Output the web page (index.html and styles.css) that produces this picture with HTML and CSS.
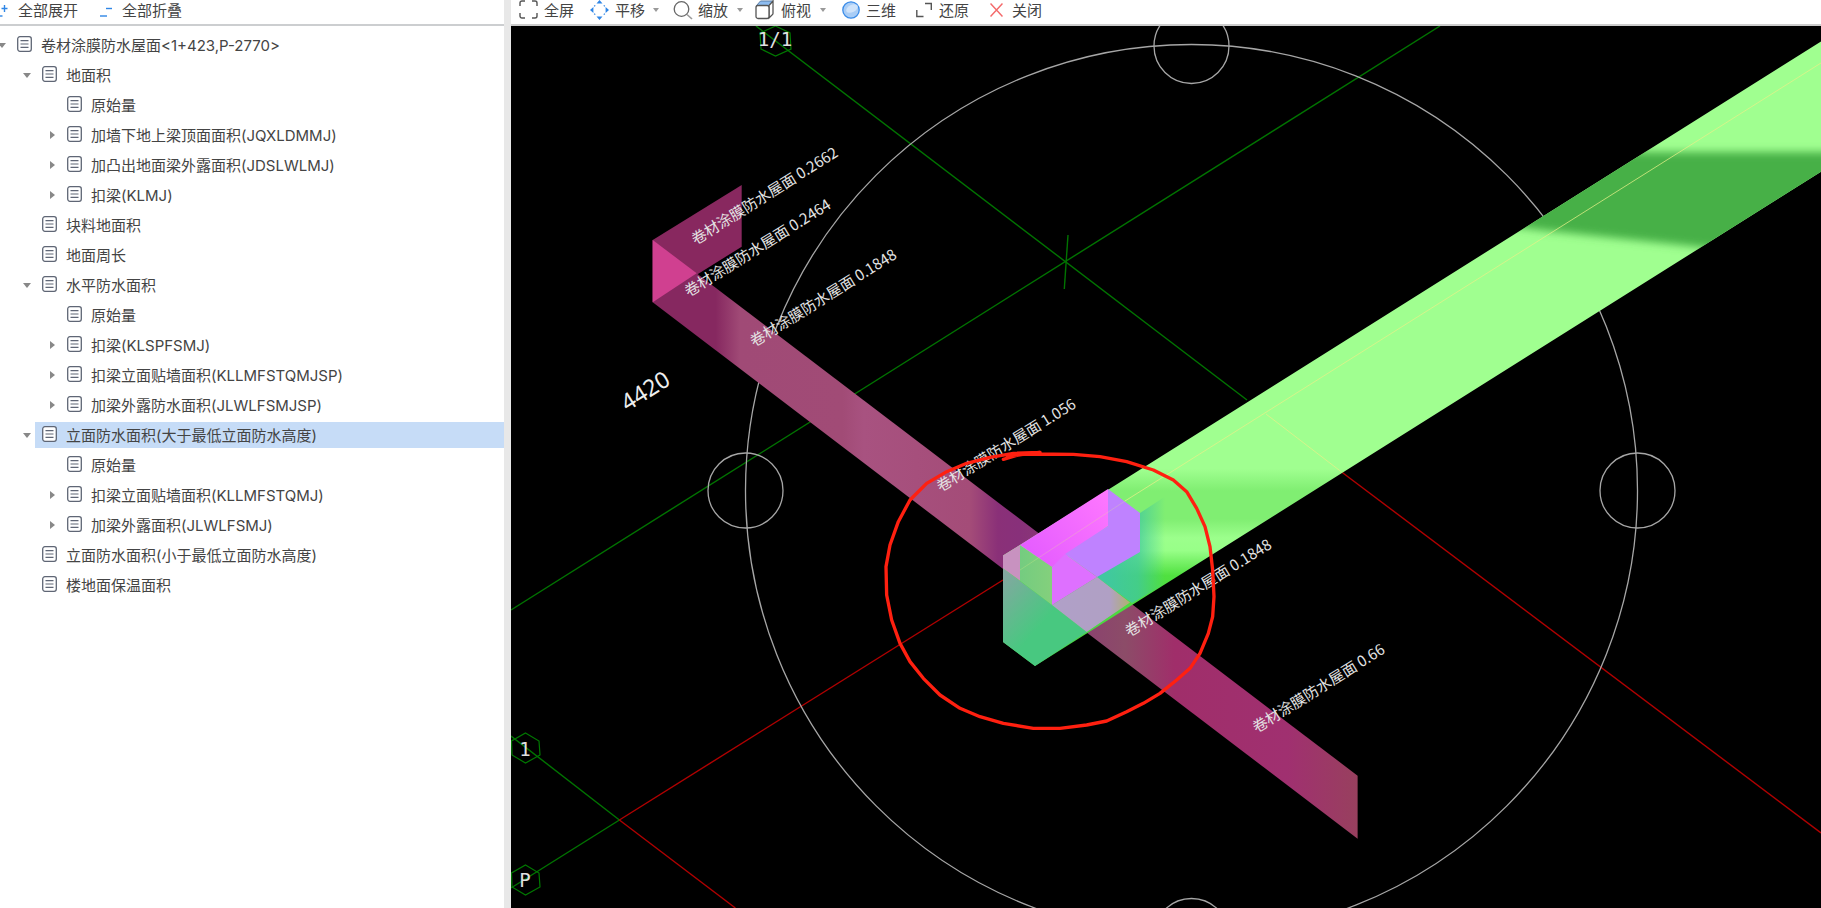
FILE: index.html
```html
<!DOCTYPE html>
<html lang="zh-CN">
<head>
<meta charset="utf-8">
<title>工程量</title>
<link rel="stylesheet" href="styles.css">
</head>
<body>
<svg class="defs" width="0" height="0" aria-hidden="true">
  <symbol id="doc" viewBox="0 0 15 16">
    <rect x="0.7" y="0.7" width="13.6" height="14.6" rx="2.2" fill="#fff" stroke="#5f6675" stroke-width="1.3"/>
    <path d="M3.5 4.6h8M3.5 8h8M3.5 11.4h8" stroke="#5f6675" stroke-width="1.2" fill="none"/>
  </symbol>
</svg>
<div class="app">
  <aside class="side">
    <div class="side-bar">
      <span class="side-tool first">
        <svg class="ic-exp" width="9" height="16" viewBox="0 0 9 16"><path d="M4.5 3v7M1.5 6.5h6" stroke="#2f86e6" stroke-width="1.4" fill="none"/><path d="M0 14h2.5" stroke="#2f86e6" stroke-width="1.4"/></svg>
        全部展开
      </span>
      <span class="side-tool second">
        <svg width="12" height="16" viewBox="0 0 12 16"><path d="M6 6.5h6" stroke="#2f86e6" stroke-width="1.4"/><path d="M0 14h7" stroke="#2f86e6" stroke-width="1.4"/></svg>
        全部折叠
      </span>
    </div>
    <ul class="tree">
      <li class="row l0"><i class="tw down"></i><svg class="doc"><use href="#doc"/></svg><span>卷材涂膜防水屋面&lt;1+423,P-2770&gt;</span></li>
      <li class="row l1"><i class="tw down"></i><svg class="doc"><use href="#doc"/></svg><span>地面积</span></li>
      <li class="row l2"><i class="tw"></i><svg class="doc"><use href="#doc"/></svg><span>原始量</span></li>
      <li class="row l2"><i class="tw right"></i><svg class="doc"><use href="#doc"/></svg><span>加墙下地上梁顶面面积(JQXLDMMJ)</span></li>
      <li class="row l2"><i class="tw right"></i><svg class="doc"><use href="#doc"/></svg><span>加凸出地面梁外露面积(JDSLWLMJ)</span></li>
      <li class="row l2"><i class="tw right"></i><svg class="doc"><use href="#doc"/></svg><span>扣梁(KLMJ)</span></li>
      <li class="row l1"><i class="tw"></i><svg class="doc"><use href="#doc"/></svg><span>块料地面积</span></li>
      <li class="row l1"><i class="tw"></i><svg class="doc"><use href="#doc"/></svg><span>地面周长</span></li>
      <li class="row l1"><i class="tw down"></i><svg class="doc"><use href="#doc"/></svg><span>水平防水面积</span></li>
      <li class="row l2"><i class="tw"></i><svg class="doc"><use href="#doc"/></svg><span>原始量</span></li>
      <li class="row l2"><i class="tw right"></i><svg class="doc"><use href="#doc"/></svg><span>扣梁(KLSPFSMJ)</span></li>
      <li class="row l2"><i class="tw right"></i><svg class="doc"><use href="#doc"/></svg><span>扣梁立面贴墙面积(KLLMFSTQMJSP)</span></li>
      <li class="row l2"><i class="tw right"></i><svg class="doc"><use href="#doc"/></svg><span>加梁外露防水面积(JLWLFSMJSP)</span></li>
      <li class="row l1 selected"><i class="tw down"></i><svg class="doc"><use href="#doc"/></svg><span>立面防水面积(大于最低立面防水高度)</span></li>
      <li class="row l2"><i class="tw"></i><svg class="doc"><use href="#doc"/></svg><span>原始量</span></li>
      <li class="row l2"><i class="tw right"></i><svg class="doc"><use href="#doc"/></svg><span>扣梁立面贴墙面积(KLLMFSTQMJ)</span></li>
      <li class="row l2"><i class="tw right"></i><svg class="doc"><use href="#doc"/></svg><span>加梁外露面积(JLWLFSMJ)</span></li>
      <li class="row l1"><i class="tw"></i><svg class="doc"><use href="#doc"/></svg><span>立面防水面积(小于最低立面防水高度)</span></li>
      <li class="row l1"><i class="tw"></i><svg class="doc"><use href="#doc"/></svg><span>楼地面保温面积</span></li>
    </ul>
  </aside>
  <div class="split"></div>
  <main class="view">
    <div class="view-bar">
      <span class="tool t-full">
        <svg width="19" height="20" viewBox="0 0 19 20" fill="none" stroke="#555" stroke-width="1.4"><path d="M1 6V3a2 2 0 0 1 2-2h3M13 1h3a2 2 0 0 1 2 2v3M18 13v3a2 2 0 0 1-2 2h-3M6 18H3a2 2 0 0 1-2-2v-3"/></svg>
        全屏
      </span>
      <span class="tool t-pan">
        <svg width="19" height="20" viewBox="0 0 19 20"><path d="M9.5 0l3 3.4h-6zM9.5 20l3-3.4h-6zM0 10l3.4-3v6zM19 10l-3.4-3v6z" fill="#2f86e6"/><path d="M5.2 5.4l-1 1M13.8 5.4l1 1M5.2 14.6l-1-1M13.8 14.6l1-1" stroke="#2f86e6" stroke-width="1.3"/></svg>
        平移
        <i class="caret"></i>
      </span>
      <span class="tool t-zoom">
        <svg width="20" height="20" viewBox="0 0 20 20" fill="none"><circle cx="8.5" cy="9" r="7.3" stroke="#666" stroke-width="1.3"/><path d="M14 14.5l5 4.5" stroke="#999" stroke-width="1.6"/></svg>
        缩放
        <i class="caret"></i>
      </span>
      <span class="tool t-top">
        <svg width="19" height="20" viewBox="0 0 19 20"><path d="M1.5 5.5L5.5 1H18l-4 4.5z" fill="#8dbcf0" stroke="#5b7fa8" stroke-width="1"/><path d="M14 5.5L18 1v12.5a2 2 0 0 1-1 1.5l-3 3z" fill="#fff" stroke="#555" stroke-width="1.3"/><rect x="1" y="5.5" width="13" height="13" rx="2" fill="#fff" stroke="#555" stroke-width="1.3"/></svg>
        俯视
        <i class="caret"></i>
      </span>
      <span class="tool t-3d">
        <svg width="18" height="20" viewBox="0 0 18 20"><circle cx="9" cy="10" r="8.2" fill="#a9cdf6" stroke="#3b8ce8" stroke-width="1.3"/><ellipse cx="10" cy="8.5" rx="6.3" ry="3.6" transform="rotate(-28 10 8.5)" fill="#cfe3fa"/></svg>
        三维
      </span>
      <span class="tool t-restore">
        <svg width="16" height="20" viewBox="0 0 16 20" fill="none" stroke="#555" stroke-width="1.4"><path d="M9 3.5h6.300V10M7.500 16.500H.8V10"/></svg>
        还原
      </span>
      <span class="tool t-close">
        <svg width="13" height="20" viewBox="0 0 13 20" fill="none" stroke="#f4696a" stroke-width="1.5"><path d="M.5 3.500l12 13M12.500 3.500l-12 13"/></svg>
        关闭
      </span>
    </div>
    <div class="canvas">
      <svg class="scene" width="1310" height="882" viewBox="511 26 1310 882">
        <defs>
          <linearGradient id="pinkBand" gradientUnits="userSpaceOnUse" x1="652" y1="0" x2="1358" y2="0">
            <stop offset="0" stop-color="#862860"/>
            <stop offset=".09" stop-color="#862860"/>
            <stop offset=".125" stop-color="#a04a76"/>
            <stop offset=".27" stop-color="#a14b76"/>
            <stop offset=".3" stop-color="#a85280"/>
            <stop offset=".45" stop-color="#a44c78"/>
            <stop offset=".49" stop-color="#8a3078"/>
            <stop offset=".52" stop-color="#88307a"/>
            <stop offset=".67" stop-color="#8c4c68"/>
            <stop offset=".74" stop-color="#a02e6a"/>
            <stop offset=".9" stop-color="#a03070"/>
            <stop offset="1" stop-color="#98405e"/>
          </linearGradient>
          <linearGradient id="greenBand" gradientUnits="userSpaceOnUse" x1="0" y1="41" x2="0" y2="670">
            <stop offset="0" stop-color="#a0ff90"/>
            <stop offset=".68" stop-color="#a0ff90"/>
            <stop offset=".715" stop-color="#80ee72"/>
            <stop offset=".76" stop-color="#80ee72"/>
            <stop offset=".79" stop-color="#9cff8c"/>
            <stop offset=".81" stop-color="#98ff88"/>
            <stop offset=".85" stop-color="#50e040"/>
            <stop offset="1" stop-color="#48d040"/>
          </linearGradient>
          <linearGradient id="teal" gradientUnits="userSpaceOnUse" x1="1105" y1="0" x2="1165" y2="0">
            <stop offset="0" stop-color="#40c8a0"/>
            <stop offset=".55" stop-color="#40c8a0" stop-opacity=".75"/>
            <stop offset="1" stop-color="#40c8a0" stop-opacity="0"/>
          </linearGradient>
          <linearGradient id="boxGreen" gradientUnits="userSpaceOnUse" x1="1005" y1="575" x2="1050" y2="615">
            <stop offset="0" stop-color="#82a8a0"/>
            <stop offset=".6" stop-color="#5ebc8c"/>
            <stop offset="1" stop-color="#48c880"/>
          </linearGradient>
          <linearGradient id="cross" gradientUnits="userSpaceOnUse" x1="1050" y1="0" x2="1130" y2="0">
            <stop offset="0" stop-color="#b0a0c8"/>
            <stop offset=".75" stop-color="#b0a0c4"/>
            <stop offset="1" stop-color="#b0b070"/>
          </linearGradient>
          <linearGradient id="topFace" gradientUnits="userSpaceOnUse" x1="1108" y1="490" x2="1030" y2="560">
            <stop offset="0" stop-color="#ff78ff"/>
            <stop offset="1" stop-color="#e45cff"/>
          </linearGradient>
          <linearGradient id="sliver" gradientUnits="userSpaceOnUse" x1="1020" y1="0" x2="1052" y2="0">
            <stop offset="0" stop-color="#74cc80"/>
            <stop offset="1" stop-color="#84d07c"/>
          </linearGradient>
          <clipPath id="bandClip">
            <polygon points="1821,41.400 1108.500,489.600 1003,555.500 1003,642 1035,666 1821,171.800"/>
          </clipPath>
          <filter id="soft" x="-20%" y="-20%" width="140%" height="140%">
            <feGaussianBlur stdDeviation="4"/>
          </filter>
        </defs>

        <g class="grid-green">
          <line x1="511" y1="610" x2="1440" y2="26"/>
          <line x1="756" y1="26" x2="1247" y2="400"/>
          <line x1="1068" y1="235" x2="1064.300" y2="289"/>
          <line x1="511" y1="736" x2="619.400" y2="820"/>
          <line x1="511" y1="888" x2="619.400" y2="820"/>
        </g>
        <g class="grid-red">
          <line x1="619.400" y1="820" x2="1003" y2="580"/>
          <line x1="619.400" y1="820" x2="735.400" y2="908"/>
          <line x1="1341.600" y1="472" x2="1821" y2="833"/>
        </g>

        <g class="rings">
          <circle cx="1191.500" cy="490.500" r="446"/>
          <circle cx="1191.500" cy="46" r="37.500"/>
          <circle cx="1637.500" cy="490.500" r="37.500"/>
          <circle cx="745.500" cy="490.500" r="37.500"/>
          <circle cx="1191.500" cy="936" r="37.500"/>
        </g>

        <polygon points="652.700,240 741.700,185 741.700,246.700 652.700,302.300" fill="#88285f"/>
        <polygon points="652.700,240 1357.600,775.700 1357.600,838.700 652.700,302.300" fill="url(#pinkBand)"/>
        <polygon points="652.700,240 696.700,273.300 652.700,302.300" fill="#d04090"/>

        <polygon points="1821,41.400 1108.500,489.600 1003,555.500 1003,642 1035,666 1821,171.800" fill="url(#greenBand)"/>
        <g clip-path="url(#bandClip)">
          <polygon points="1480,152 1840,152 1840,264 1691,246 1540,230 1480,222" fill="#46b046" filter="url(#soft)"/>
        </g>
        <polygon points="1097,577 1108,526 1140,513 1175,490 1175,578 1132,603" fill="url(#teal)"/>
        <polygon points="1003,568.300 1052,605 1086.700,632 1035,666 1003,642" fill="url(#boxGreen)"/>
        <polygon points="1052,605 1097,577 1130,602.600 1086.700,632" fill="url(#cross)"/>
        <polygon points="1003,555.500 1020,545 1020,580.700 1003,568.300" fill="#c892c0"/>
        <polygon points="1020,545 1052,567 1052,605 1020,580.700" fill="url(#sliver)"/>
        <polygon points="1108,489 1020,545 1052,567 1108,526" fill="url(#topFace)"/>
        <polygon points="1108,489 1140,513 1140,552 1097,577 1065,554 1108,526" fill="#bf82ff"/>
        <polygon points="1052,567 1065,554 1097,577 1052,605" fill="#de70ff"/>

        <g class="yellow">
          <line x1="1125" y1="501" x2="1821" y2="63"/>
          <line x1="1266" y1="414" x2="1341.600" y2="472"/>
          <line class="faint" x1="1020" y1="570" x2="1125" y2="501"/>
        </g>

        <g class="bubble">
          <polygon points="775.500,26 790,33 791,49 775.500,56 761,49 760,33"/>
          <polygon points="525.500,733 539,741 540,755 525.500,763 512,755 511.500,741"/>
          <polygon points="525.500,865 539,873 540,887 525.500,895 512,887 511.500,873"/>
        </g>
        <text class="axis" x="775" y="46" text-anchor="middle">1/1</text>
        <text class="axis" x="525" y="756" text-anchor="middle">1</text>
        <text class="axis" x="525" y="887" text-anchor="middle">P</text>

        <text class="lbl" transform="translate(693 241) rotate(-32)" dy="5">卷材涂膜防水屋面 0.2662</text>
        <text class="lbl" transform="translate(686 293) rotate(-32)" dy="5">卷材涂膜防水屋面 0.2464</text>
        <text class="lbl" transform="translate(751.700 343) rotate(-32)" dy="5">卷材涂膜防水屋面 0.1848</text>
        <text class="lbl" transform="translate(938 488) rotate(-32)" dy="5">卷材涂膜防水屋面 1.056</text>
        <text class="lbl" transform="translate(1126.600 633) rotate(-32)" dy="5">卷材涂膜防水屋面 0.1848</text>
        <text class="lbl" transform="translate(1254 729) rotate(-32)" dy="5">卷材涂膜防水屋面 0.66</text>
        <text class="dim" transform="translate(623 405) rotate(-32)" dy="8">4420</text>

        <g transform="translate(860 420) scale(.33333)">
          <polyline class="ink" points="430,118 470,106 540,97 440,105 520,102 640,103 720,110 800,125 880,150 940,180 980,215 1010,265 1035,320 1050,380 1058,450 1062,530 1058,590 1045,640 1020,700 990,745 950,780 900,820 850,850 800,875 740,903 680,915 600,925 520,925 430,910 360,890 300,865 240,825 190,775 150,725 120,670 95,600 80,525 78,440 90,375 115,305 150,240 200,190 260,155 320,130 390,112 460,100 540,97"/>
        </g>
      </svg>
    </div>
  </main>
</div>
</body>
</html>
```

FILE: styles.css
```css
* { box-sizing: border-box; }
html, body { margin: 0; padding: 0; height: 100%; overflow: hidden; background: #fff; }
body { font-family: Inter, "Noto Sans CJK SC", sans-serif; font-size: 15px; color: #444; }
.defs { position: absolute; }
.app { display: flex; height: 908px; }

.side { width: 504px; flex: none; background: #fff; display: flex; flex-direction: column; overflow: hidden; }
.side-bar { height: 26px; flex: none; display: flex; align-items: flex-start; border-bottom: 2px solid #ccced0; font-family: "Noto Sans CJK SC", sans-serif; }
.side-tool { display: flex; align-items: center; height: 20px; line-height: 20px; }
.side-tool svg { flex: none; }
.first { gap: 9px; }
.second { gap: 10px; margin-left: 22px; }

.tree { list-style: none; margin: 0; padding: 4px 0 0; }
.row { height: 30px; display: flex; align-items: center; white-space: nowrap; line-height: 30px; }
.row span { margin-top: 2px; }
.l0 { padding-left: 0; margin-left: -3px; }
.l1 { padding-left: 22px; }
.l2 { padding-left: 47px; }
.tw { width: 10px; height: 10px; flex: none; margin-right: 10px; position: relative; display: block; }
.tw.down::before { content: ""; position: absolute; left: 1px; top: 3px; border-left: 4px solid transparent; border-right: 4px solid transparent; border-top: 5px solid #888; }
.tw.right::before { content: ""; position: absolute; left: 3px; top: 1px; border-top: 4px solid transparent; border-bottom: 4px solid transparent; border-left: 5px solid #888; }
.doc { width: 15px; height: 16px; flex: none; margin-right: 9px; margin-top: -2px; }
.selected { background: linear-gradient(#c6dcf7, #c6dcf7) 35px 2px / 469px 26px no-repeat; }

.split { width: 7px; flex: none; background: #e8e8e8; }

.view { flex: 1; min-width: 0; display: flex; flex-direction: column; }
.view-bar { height: 26px; flex: none; display: flex; align-items: flex-start; padding-left: 8px; background: #fff; border-bottom: 2px solid #ccc; font-family: "Noto Sans CJK SC", sans-serif; }
.tool { display: flex; align-items: center; height: 20px; line-height: 20px; gap: 6px; white-space: nowrap; }
.tool svg { flex: none; }
.caret { display: block; width: 0; height: 0; margin-left: 2px; border-left: 3px solid transparent; border-right: 3px solid transparent; border-top: 4px solid #999; }
.t-pan { margin-left: 16px; }
.t-zoom { margin-left: 14px; gap: 5px; }
.t-zoom .caret { margin-left: 4px; }
.t-top { margin-left: 12px; gap: 7px; }
.t-3d { margin-left: 16px; }
.t-restore { margin-left: 20px; gap: 7px; }
.t-close { margin-left: 21px; gap: 9px; }

.canvas { flex: 1; background: #000; overflow: hidden; }
.scene { display: block; }
.grid-green line { stroke: #007400; stroke-width: 1.4; }
.grid-red line { stroke: #b00000; stroke-width: 1.4; }
.rings circle { fill: none; stroke: #a6a6a6; stroke-width: 1.3; }
.yellow line { stroke: #e6f088; stroke-width: 1; opacity: .75; }
.yellow line.faint { opacity: .25; }
.bubble polygon { fill: none; stroke: #007800; stroke-width: 1.2; }
.axis { font-family: "DejaVu Sans Mono", monospace; font-size: 19px; fill: #e0e0e0; }
.lbl { font-family: "Noto Sans CJK SC", "Noto Sans", sans-serif; font-size: 15px; fill: #e4e4e4; }
.dim { font-family: "Noto Sans", sans-serif; font-size: 23px; fill: #eee; }
.ink { fill: none; stroke: #ff2010; stroke-width: 10; stroke-linejoin: round; stroke-linecap: round; }
```
